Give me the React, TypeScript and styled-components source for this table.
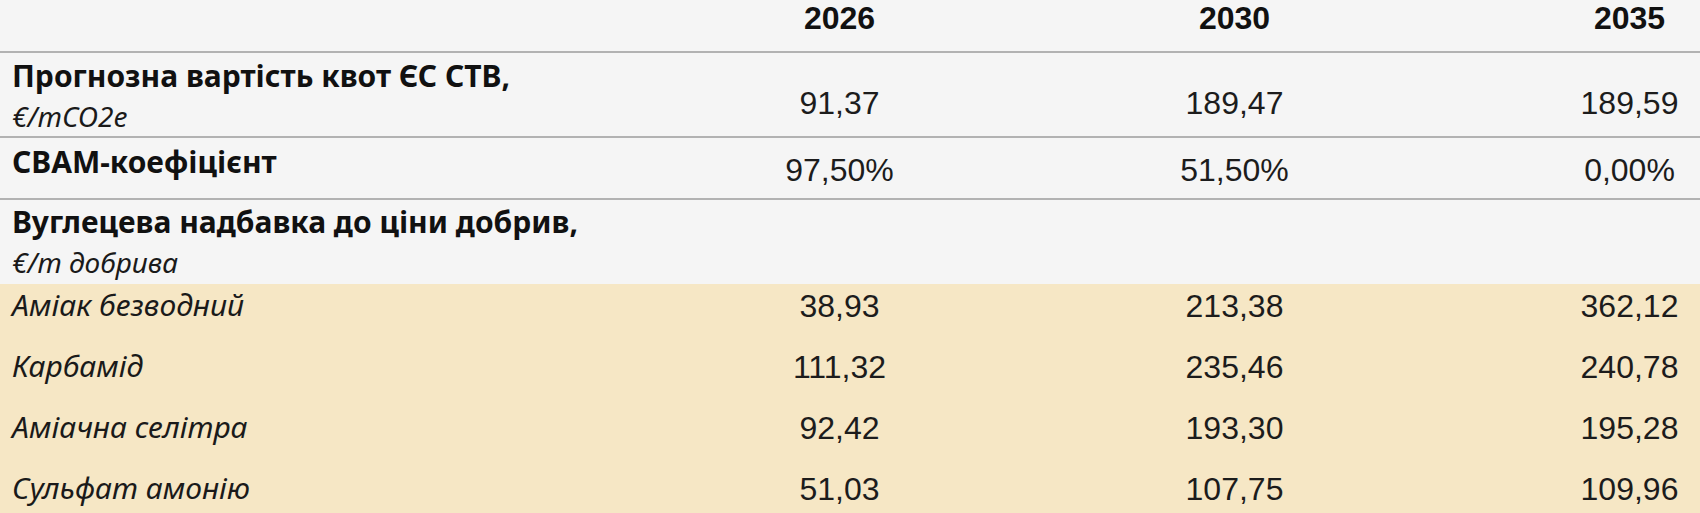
import React from 'react'
import styled, { createGlobalStyle } from 'styled-components'

const GlobalStyle = createGlobalStyle`
  html, body {
    margin: 0;
    padding: 0;
    background: #f5f5f5;
    overflow: hidden;
  }
`

type Item = {
  name: string
  values: string[]
}

const years = ['2026', '2030', '2035']

const items: Item[] = [
  { name: 'Аміак безводний', values: ['38,93', '213,38', '362,12'] },
  { name: 'Карбамід', values: ['111,32', '235,46', '240,78'] },
  { name: 'Аміачна селітра', values: ['92,42', '193,30', '195,28'] },
  { name: 'Сульфат амонію', values: ['51,03', '107,75', '109,96'] },
]

export default function App() {
  return (
    <Frame>
      <GlobalStyle />
      <Table>
        <Row $h={51} $line>
          <LabelCell $top={0} />
          {years.map((y) => (
            <ValueCell key={y} $top={2}>
              <Year>{y}</Year>
            </ValueCell>
          ))}
        </Row>

        <Row $h={83} $line>
          <LabelCell $top={5}>
            <Label>Прогнозна вартість квот ЄС СТВ,</Label>
            <Unit>€/mCO2e</Unit>
          </LabelCell>
          {['91,37', '189,47', '189,59'].map((v) => (
            <ValueCell key={v} $top={34}>
              <Value>{v}</Value>
            </ValueCell>
          ))}
        </Row>

        <Row $h={60} $line>
          <LabelCell $top={6}>
            <Label>CBAM-коефіцієнт</Label>
          </LabelCell>
          {['97,50%', '51,50%', '0,00%'].map((v) => (
            <ValueCell key={v} $top={16}>
              <Value>{v}</Value>
            </ValueCell>
          ))}
        </Row>

        <Row $h={84}>
          <LabelCell $top={4}>
            <Label>Вуглецева надбавка до ціни добрив,</Label>
            <Unit>€/т добрива</Unit>
          </LabelCell>
        </Row>

        {items.map((item) => (
          <Row key={item.name} $h={61} $tint>
            <LabelCell $top={3}>
              <ItemName>{item.name}</ItemName>
            </LabelCell>
            {item.values.map((v, i) => (
              <ValueCell key={i} $top={6}>
                <Value>{v}</Value>
              </ValueCell>
            ))}
          </Row>
        ))}
      </Table>
    </Frame>
  )
}

// the table is wider than the window; only its left part shows
const Frame = styled.div`
  width: 100vw;
  height: 100vh;
  overflow: hidden;
`

const Table = styled.div`
  display: flex;
  flex-direction: column;
  width: 1827px;
`

const Row = styled.div<{ $h: number; $line?: boolean; $tint?: boolean }>`
  display: grid;
  grid-template-columns: 642px repeat(3, 395px);
  align-items: start;
  height: ${(p) => p.$h}px;
  flex-shrink: 0;
  background: ${(p) => (p.$tint ? '#f6e7c5' : '#f5f5f5')};
  border-bottom: ${(p) => (p.$line ? '2px solid #b2b2b2' : 'none')};
`

const LabelCell = styled.div<{ $top: number }>`
  display: flex;
  flex-direction: column;
  align-items: flex-start;
  padding: ${(p) => p.$top}px 0 0 12px;
  white-space: nowrap;
`

const ValueCell = styled.div<{ $top: number }>`
  display: flex;
  justify-content: center;
  padding-top: ${(p) => p.$top}px;
`

const Year = styled.span`
  font-family: 'Liberation Sans', Arial, sans-serif;
  font-weight: 700;
  font-size: 32px;
  line-height: 32px;
  color: #111;
`

const Value = styled.span`
  font-family: 'Liberation Sans', Arial, sans-serif;
  font-size: 32px;
  line-height: 32px;
  color: #1c1c1c;
`

const Label = styled.span`
  font-family: 'Noto Sans', Roboto, sans-serif;
  font-weight: 700;
  font-size: 30px;
  line-height: 36px;
  color: #111;
`

const Unit = styled.span`
  margin-top: 6px;
  font-family: 'Noto Sans', Roboto, sans-serif;
  font-style: italic;
  font-size: 28px;
  line-height: 32px;
  color: #1a1a1a;
`

const ItemName = styled.span`
  font-family: 'Noto Sans', Roboto, sans-serif;
  font-style: italic;
  font-size: 30px;
  line-height: 36px;
  color: #1a1a1a;
`
